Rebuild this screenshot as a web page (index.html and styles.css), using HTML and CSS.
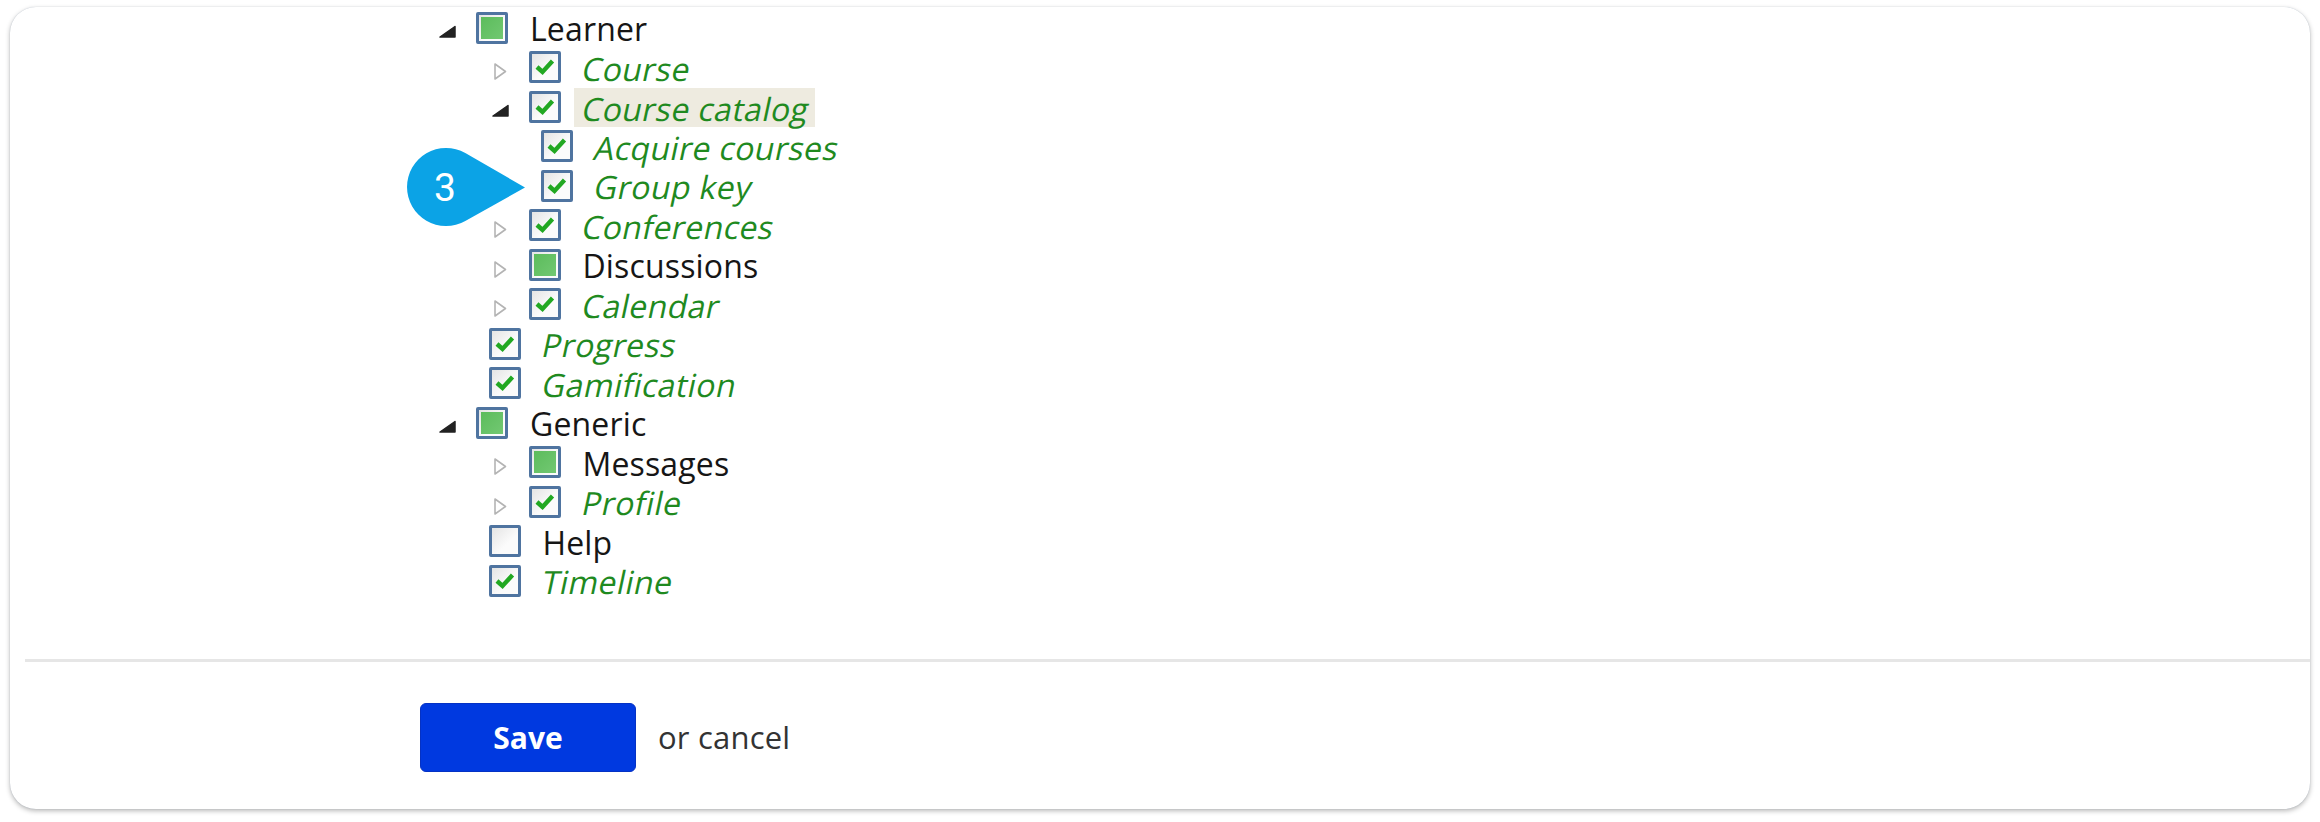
FILE: index.html
```html
<!DOCTYPE html>
<html lang="en">
<head>
    <meta charset="UTF-8">
    <title>Permissions</title>
    <link rel="stylesheet" href="styles.css">
</head>
<body>
<div class="card">
    <div class="tree-wrap">
        <ul class="tree">
            <li>
                <div class="row"><svg class="exp" viewBox="0 0 40 40"><path class="open" d="M4,29 L19,29 L19,18.5 Z"/></svg><span class="cb partial"></span><span class="lbl">Learner</span></div>
                <ul>
                    <li><div class="row"><svg class="exp" viewBox="0 0 40 40"><path class="closed" d="M6,17 L16.5,24.5 L6,32 Z"/></svg><span class="cb checked"><svg viewBox="0 0 26 26"><path d="M5,13 L10.5,18 L20.5,7"/></svg></span><span class="lbl on"><em>Course</em></span></div></li>
                    <li>
                        <div class="row"><svg class="exp" viewBox="0 0 40 40"><path class="open" d="M4,29 L19,29 L19,18.5 Z"/></svg><span class="cb checked"><svg viewBox="0 0 26 26"><path d="M5,13 L10.5,18 L20.5,7"/></svg></span><span class="lbl on sel"><em>Course catalog</em></span></div>
                        <ul>
                            <li><div class="row"><span class="cb checked"><svg viewBox="0 0 26 26"><path d="M5,13 L10.5,18 L20.5,7"/></svg></span><span class="lbl on"><em>Acquire courses</em></span></div></li>
                            <li><div class="row"><span class="cb checked"><svg viewBox="0 0 26 26"><path d="M5,13 L10.5,18 L20.5,7"/></svg></span><span class="lbl on"><em>Group key</em></span></div></li>
                        </ul>
                    </li>
                    <li><div class="row"><svg class="exp" viewBox="0 0 40 40"><path class="closed" d="M6,17 L16.5,24.5 L6,32 Z"/></svg><span class="cb checked"><svg viewBox="0 0 26 26"><path d="M5,13 L10.5,18 L20.5,7"/></svg></span><span class="lbl on"><em>Conferences</em></span></div></li>
                    <li><div class="row"><svg class="exp" viewBox="0 0 40 40"><path class="closed" d="M6,17 L16.5,24.5 L6,32 Z"/></svg><span class="cb partial"></span><span class="lbl">Discussions</span></div></li>
                    <li><div class="row"><svg class="exp" viewBox="0 0 40 40"><path class="closed" d="M6,17 L16.5,24.5 L6,32 Z"/></svg><span class="cb checked"><svg viewBox="0 0 26 26"><path d="M5,13 L10.5,18 L20.5,7"/></svg></span><span class="lbl on"><em>Calendar</em></span></div></li>
                    <li><div class="row"><span class="cb checked"><svg viewBox="0 0 26 26"><path d="M5,13 L10.5,18 L20.5,7"/></svg></span><span class="lbl on"><em>Progress</em></span></div></li>
                    <li><div class="row"><span class="cb checked"><svg viewBox="0 0 26 26"><path d="M5,13 L10.5,18 L20.5,7"/></svg></span><span class="lbl on"><em>Gamification</em></span></div></li>
                </ul>
            </li>
            <li>
                <div class="row"><svg class="exp" viewBox="0 0 40 40"><path class="open" d="M4,29 L19,29 L19,18.5 Z"/></svg><span class="cb partial"></span><span class="lbl">Generic</span></div>
                <ul>
                    <li><div class="row"><svg class="exp" viewBox="0 0 40 40"><path class="closed" d="M6,17 L16.5,24.5 L6,32 Z"/></svg><span class="cb partial"></span><span class="lbl">Messages</span></div></li>
                    <li><div class="row"><svg class="exp" viewBox="0 0 40 40"><path class="closed" d="M6,17 L16.5,24.5 L6,32 Z"/></svg><span class="cb checked"><svg viewBox="0 0 26 26"><path d="M5,13 L10.5,18 L20.5,7"/></svg></span><span class="lbl on"><em>Profile</em></span></div></li>
                    <li><div class="row"><span class="cb"></span><span class="lbl">Help</span></div></li>
                    <li><div class="row"><span class="cb checked"><svg viewBox="0 0 26 26"><path d="M5,13 L10.5,18 L20.5,7"/></svg></span><span class="lbl on"><em>Timeline</em></span></div></li>
                </ul>
            </li>
        </ul>
    </div>

    <div class="footer">
        <button class="save">Save</button>
        <span class="cancel">or cancel</span>
    </div>

    <svg class="callout" width="140" height="100" viewBox="400 140 140 100">
        <path d="M465.3,153.1 L525,187.5 L465.3,220.9 A39,39 0 1,1 465.3,153.1 Z" fill="#0ba3e6"/>
        <text x="445" y="188" text-anchor="middle" dominant-baseline="central" fill="#fff" font-family="Roboto, sans-serif" font-size="39">3</text>
    </svg>
</div>
</body>
</html>
```

FILE: styles.css
```css
body { margin: 0; padding: 7px 10px 13px; background: #fff; font-family: "Open Sans", sans-serif; }

.card { position: relative; height: 802px; background: #fff; border-radius: 26px; box-shadow: 0 2px 5px rgba(0,0,0,0.28), 0 0 1px rgba(70,100,140,0.35); overflow: hidden; }

.tree-wrap { padding: 1px 0 58px; }
.tree, .tree ul { list-style: none; margin: 0; padding: 0; }
.tree { padding-left: 426px; }
.tree ul { padding-left: 52.5px; }

.row { display: flex; align-items: center; height: 39.5px; }

.exp { width: 40px; height: 40px; flex: none; }
.exp .open { fill: #222; stroke: #222; stroke-width: 1.5; stroke-linejoin: round; }
.exp .closed { fill: none; stroke: #b4b4b4; stroke-width: 1.6; stroke-linejoin: round; }

.cb { width: 32px; height: 32px; box-sizing: border-box; flex: none; border: 3px solid #4f74a0; border-radius: 2px; background: linear-gradient(135deg, #e4e4e4, #fbfbfb 60%); position: relative; }
.cb svg { display: block; width: 26px; height: 26px; }
.cb svg path { fill: none; stroke: #22a822; stroke-width: 4.4; }
.cb.partial::after { content: ""; position: absolute; left: 2px; top: 2px; right: 2px; bottom: 2px; background: linear-gradient(135deg, #5cbc5c, #72c872); }

.lbl { display: flex; align-items: center; align-self: stretch; margin-left: 13px; padding: 2px 6px 0 9px; font-size: 32px; letter-spacing: 0.15px; color: #161616; white-space: nowrap; }
.lbl.on { color: #1f8a1f; }
.lbl em { display: inline-block; font-style: normal; letter-spacing: 0.4px; transform: skewX(-12deg); }
.lbl.sel { background: #eeebe0; margin-top: 1px; }

.footer { margin-left: 15px; border-top: 3px solid #e6e6e6; padding: 41px 0 0 395px; display: flex; align-items: center; }
.save { width: 216px; height: 69px; background: #0039e0; color: #fff; border: 1px solid #0532c4; border-radius: 6px; font-family: "Open Sans", sans-serif; font-weight: bold; font-size: 30px; padding: 0; }
.cancel { margin-left: 22px; font-size: 31px; letter-spacing: 0.2px; color: #333; }

.callout { position: absolute; left: 390px; top: 133px; }
```
